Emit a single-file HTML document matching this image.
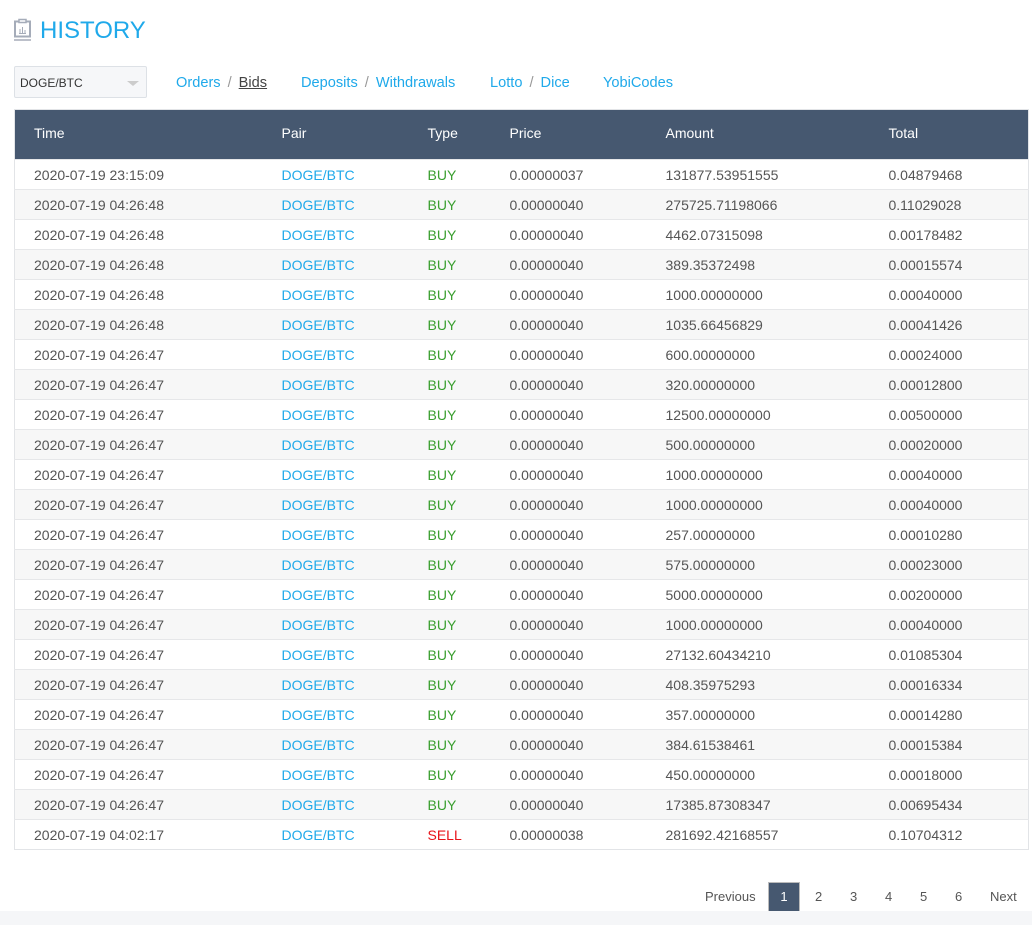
<!DOCTYPE html>
<html><head><meta charset="utf-8"><style>
*{box-sizing:border-box;margin:0;padding:0}
body{width:1032px;height:925px;background:#fff;font-family:"Liberation Sans",sans-serif;font-size:14px;color:#555;position:relative;overflow:hidden}
.title{position:absolute;left:40px;top:17px;font-size:24px;color:#1fa9ea;letter-spacing:0}
.icon{position:absolute;left:13px;top:18px}
.sel{position:absolute;left:14px;top:66px;width:133px;height:32px;border:1px solid #dde1e6;background:#f6f7f9;border-radius:2px;font-size:12px;color:#333;padding:9px 0 0 5px}
.sel:after{content:"";position:absolute;right:7px;top:14px;border-left:6px solid transparent;border-right:6px solid transparent;border-top:5px solid #ccc}
.nav{position:absolute;top:75px;font-size:14.6px;color:#1fa9ea}
.nav .s{color:#999;margin:0 7px}
.nav u{color:#444}
table{position:absolute;left:14px;top:109px;width:1015px;border-collapse:collapse;border:1px solid #e2e4e7}
th{background:#465870;color:#fff;font-weight:normal;height:50px;text-align:left;padding:0 0 3px 0}
td{height:30px;padding:0;border-top:1px solid #e6e7e9}
tr:nth-child(odd) td{background:#f7f7f7}
th:first-child,td:first-child{padding-left:19px}
.c1{width:267px}.c2{width:146px}.c3{width:82px}.c4{width:156px}.c5{width:223px}
.p{color:#1fa9ea}.b{color:#3a9f2f}.r{color:#e8141a}
.pg{position:absolute;top:882px;height:30px;font-size:13px;color:#555;line-height:30px}
.pg span{position:absolute;top:0;text-align:center}
.cur{background:#465870;color:#fff;width:32px;height:30px;border:1px solid #bbb}
.foot{position:absolute;left:0;top:911px;width:1032px;height:14px;background:#f5f6f8}
</style></head><body>
<svg class="icon" width="20" height="24" viewBox="0 0 20 24"><rect x="2" y="3.5" width="15" height="15" fill="none" stroke="#a5acb9" stroke-width="2"/><rect x="6" y="1.5" width="7" height="3" fill="#fff" stroke="#a5acb9" stroke-width="1.5"/><path d="M7 15V11M9.5 15V9M12 15V12M6 15.5H13" stroke="#a5acb9" stroke-width="1"/><path d="M1 22H18" stroke="#a5acb9" stroke-width="1.5"/></svg>
<div class="title">HISTORY</div>
<div class="sel">DOGE/BTC</div>
<div class="nav" style="left:176px">Orders<span class="s">/</span><u>Bids</u></div>
<div class="nav" style="left:301px">Deposits<span class="s">/</span>Withdrawals</div>
<div class="nav" style="left:490px">Lotto<span class="s">/</span>Dice</div>
<div class="nav" style="left:603px">YobiCodes</div>
<table>
<tr><th class="c1">Time</th><th class="c2">Pair</th><th class="c3">Type</th><th class="c4">Price</th><th class="c5">Amount</th><th>Total</th></tr>
<tr><td>2020-07-19 23:15:09</td><td class="p">DOGE/BTC</td><td class="b">BUY</td><td>0.00000037</td><td>131877.53951555</td><td>0.04879468</td></tr>
<tr><td>2020-07-19 04:26:48</td><td class="p">DOGE/BTC</td><td class="b">BUY</td><td>0.00000040</td><td>275725.71198066</td><td>0.11029028</td></tr>
<tr><td>2020-07-19 04:26:48</td><td class="p">DOGE/BTC</td><td class="b">BUY</td><td>0.00000040</td><td>4462.07315098</td><td>0.00178482</td></tr>
<tr><td>2020-07-19 04:26:48</td><td class="p">DOGE/BTC</td><td class="b">BUY</td><td>0.00000040</td><td>389.35372498</td><td>0.00015574</td></tr>
<tr><td>2020-07-19 04:26:48</td><td class="p">DOGE/BTC</td><td class="b">BUY</td><td>0.00000040</td><td>1000.00000000</td><td>0.00040000</td></tr>
<tr><td>2020-07-19 04:26:48</td><td class="p">DOGE/BTC</td><td class="b">BUY</td><td>0.00000040</td><td>1035.66456829</td><td>0.00041426</td></tr>
<tr><td>2020-07-19 04:26:47</td><td class="p">DOGE/BTC</td><td class="b">BUY</td><td>0.00000040</td><td>600.00000000</td><td>0.00024000</td></tr>
<tr><td>2020-07-19 04:26:47</td><td class="p">DOGE/BTC</td><td class="b">BUY</td><td>0.00000040</td><td>320.00000000</td><td>0.00012800</td></tr>
<tr><td>2020-07-19 04:26:47</td><td class="p">DOGE/BTC</td><td class="b">BUY</td><td>0.00000040</td><td>12500.00000000</td><td>0.00500000</td></tr>
<tr><td>2020-07-19 04:26:47</td><td class="p">DOGE/BTC</td><td class="b">BUY</td><td>0.00000040</td><td>500.00000000</td><td>0.00020000</td></tr>
<tr><td>2020-07-19 04:26:47</td><td class="p">DOGE/BTC</td><td class="b">BUY</td><td>0.00000040</td><td>1000.00000000</td><td>0.00040000</td></tr>
<tr><td>2020-07-19 04:26:47</td><td class="p">DOGE/BTC</td><td class="b">BUY</td><td>0.00000040</td><td>1000.00000000</td><td>0.00040000</td></tr>
<tr><td>2020-07-19 04:26:47</td><td class="p">DOGE/BTC</td><td class="b">BUY</td><td>0.00000040</td><td>257.00000000</td><td>0.00010280</td></tr>
<tr><td>2020-07-19 04:26:47</td><td class="p">DOGE/BTC</td><td class="b">BUY</td><td>0.00000040</td><td>575.00000000</td><td>0.00023000</td></tr>
<tr><td>2020-07-19 04:26:47</td><td class="p">DOGE/BTC</td><td class="b">BUY</td><td>0.00000040</td><td>5000.00000000</td><td>0.00200000</td></tr>
<tr><td>2020-07-19 04:26:47</td><td class="p">DOGE/BTC</td><td class="b">BUY</td><td>0.00000040</td><td>1000.00000000</td><td>0.00040000</td></tr>
<tr><td>2020-07-19 04:26:47</td><td class="p">DOGE/BTC</td><td class="b">BUY</td><td>0.00000040</td><td>27132.60434210</td><td>0.01085304</td></tr>
<tr><td>2020-07-19 04:26:47</td><td class="p">DOGE/BTC</td><td class="b">BUY</td><td>0.00000040</td><td>408.35975293</td><td>0.00016334</td></tr>
<tr><td>2020-07-19 04:26:47</td><td class="p">DOGE/BTC</td><td class="b">BUY</td><td>0.00000040</td><td>357.00000000</td><td>0.00014280</td></tr>
<tr><td>2020-07-19 04:26:47</td><td class="p">DOGE/BTC</td><td class="b">BUY</td><td>0.00000040</td><td>384.61538461</td><td>0.00015384</td></tr>
<tr><td>2020-07-19 04:26:47</td><td class="p">DOGE/BTC</td><td class="b">BUY</td><td>0.00000040</td><td>450.00000000</td><td>0.00018000</td></tr>
<tr><td>2020-07-19 04:26:47</td><td class="p">DOGE/BTC</td><td class="b">BUY</td><td>0.00000040</td><td>17385.87308347</td><td>0.00695434</td></tr>
<tr><td>2020-07-19 04:02:17</td><td class="p">DOGE/BTC</td><td class="r">SELL</td><td>0.00000038</td><td>281692.42168557</td><td>0.10704312</td></tr>
</table>
<div class="pg" style="left:0;width:1032px">
<span style="left:705px">Previous</span>
<span class="cur" style="left:768px;top:0;line-height:28px">1</span>
<span style="left:815px">2</span>
<span style="left:850px">3</span>
<span style="left:885px">4</span>
<span style="left:920px">5</span>
<span style="left:955px">6</span>
<span style="left:990px">Next</span>
</div>
<div class="foot"></div>
</body></html>
